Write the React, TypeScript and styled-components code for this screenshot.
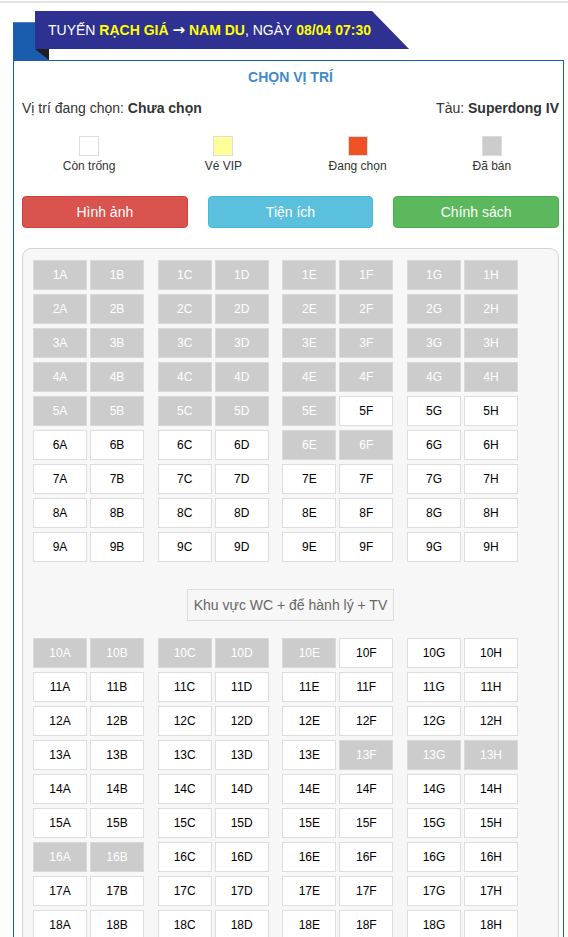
import React from 'react';
import styled, { createGlobalStyle } from 'styled-components';

const GlobalStyle = createGlobalStyle`
    html, body {
        margin: 0;
        padding: 0;
        background: #fff;
        overflow: hidden;
    }
    body {
        font-family: "Liberation Sans", Arial, sans-serif;
        font-size: 14px;
        color: #333;
    }
    * {
        box-sizing: border-box;
    }
`;

const Page = styled.div`
    width: 568px;
    padding: 0 4px 0 13px;
`;

const TopRule = styled.div`
    height: 2px;
    margin: 1px -4px 0 -13px;
    background: #e4e4e4;
`;

const Header = styled.div`
    position: relative;
    height: 49px;
    margin-top: 8px;
`;

const BlueTab = styled.div`
    position: absolute;
    left: 0;
    top: 11px;
    width: 36px;
    height: 38px;
    background: #1a5cae;
    border-top: 1px solid #4a80c2;
`;

const Fold = styled.div`
    position: absolute;
    left: 22px;
    top: 38px;
    width: 0;
    height: 0;
    border-top: 11px solid #1f1f22;
    border-left: 14px solid transparent;
`;

const Banner = styled.div`
    position: relative;
    z-index: 1;
    display: inline-flex;
    align-items: center;
    height: 38px;
    margin-left: 22px;
    padding: 0 38px 0 13px;
    background: #2e3192;
    color: #fff;
    font-size: 14px;
    white-space: nowrap;
    clip-path: polygon(0 0, calc(100% - 37px) 0, 100% 100%, 0 100%);
`;

const Hi = styled.b`
    color: #ffff00;
`;

const Arrow = styled.span`
    font-family: "DejaVu Sans", sans-serif;
    font-weight: bold;
    font-size: 15px;
    color: #ffffff;
`;

const Panel = styled.div`
    border: 1px solid #1a5cae;
    border-bottom: none;
    padding: 6px 4px 0 8px;
`;

const Title = styled.div`
    text-align: center;
    font-weight: bold;
    color: #428bca;
    line-height: 20px;
`;

const InfoRow = styled.div`
    display: flex;
    justify-content: space-between;
    margin-top: 11px;
    line-height: 20px;
    color: #333;
`;

const Legend = styled.div`
    display: grid;
    grid-template-columns: repeat(4, 1fr);
    margin-top: 18px;
`;

const LegendItem = styled.div`
    display: flex;
    flex-direction: column;
    align-items: center;
`;

const Swatch = styled.div<{ $color: string }>`
    width: 20px;
    height: 20px;
    background: ${(p) => p.$color};
    border: 1px solid #dddddd;
`;

const LegendLabel = styled.div`
    line-height: 20px;
    font-size: 12px;
    color: #333;
`;

const Buttons = styled.div`
    display: grid;
    grid-template-columns: repeat(3, 1fr);
    column-gap: 20px;
    margin-top: 20px;
`;

const Button = styled.button<{ $bg: string; $border: string }>`
    height: 32px;
    border-radius: 4px;
    border: 1px solid ${(p) => p.$border};
    background: ${(p) => p.$bg};
    color: #fff;
    font-family: inherit;
    font-size: 14px;
    padding: 0;
`;

const SeatMap = styled.div`
    margin-top: 20px;
    padding: 11px 10px 20px;
    background: #f7f7f7;
    border: 1px solid #d2d2d2;
    border-radius: 9px;
`;

const Rows = styled.div`
    display: flex;
    flex-direction: column;
    gap: 4px;
`;

const Row = styled.div`
    display: flex;
    gap: 13.67px;
`;

const Pair = styled.div`
    display: flex;
    gap: 3px;
`;

const Seat = styled.div<{ $sold: boolean }>`
    width: 54px;
    height: 30px;
    display: flex;
    align-items: center;
    justify-content: center;
    font-size: 12px;
    border: 1px solid ${(p) => (p.$sold ? '#d9d9d9' : '#dddddd')};
    background: ${(p) => (p.$sold ? '#cccccc' : '#ffffff')};
    color: ${(p) => (p.$sold ? '#ffffff' : '#000000')};
`;

const Facility = styled.div`
    align-self: center;
    height: 32px;
    line-height: 30px;
    margin: 27px 0 17px;
    padding: 0 6px;
    border: 1px solid #dddddd;
    color: #666;
    font-size: 14px;
`;

const Column = styled.div`
    display: flex;
    flex-direction: column;
`;

const cols = [
    ['A', 'B'],
    ['C', 'D'],
    ['E', 'F'],
    ['G', 'H'],
];

const sold = new Set<string>([
    ...[1, 2, 3, 4].flatMap((r) => 'ABCDEFGH'.split('').map((c) => `${r}${c}`)),
    '5A', '5B', '5C', '5D', '5E',
    '6E', '6F',
    '10A', '10B', '10C', '10D', '10E',
    '13F', '13G', '13H',
    '16A', '16B',
]);

const SeatRows: React.FC<{ from: number; to: number }> = ({ from, to }) => {
    const rows: number[] = [];
    for (let r = from; r <= to; r++) rows.push(r);
    return (
        <Rows>
            {rows.map((r) => (
                <Row key={r}>
                    {cols.map((pair) => (
                        <Pair key={pair[0]}>
                            {pair.map((c) => {
                                const id = `${r}${c}`;
                                return (
                                    <Seat key={id} $sold={sold.has(id)}>
                                        {id}
                                    </Seat>
                                );
                            })}
                        </Pair>
                    ))}
                </Row>
            ))}
        </Rows>
    );
};

const legend = [
    { label: 'Còn trống', color: '#ffffff' },
    { label: 'Vé VIP', color: '#ffff99' },
    { label: 'Đang chọn', color: '#f05223' },
    { label: 'Đã bán', color: '#cccccc' },
];

export default function App() {
    return (
        <Page>
            <GlobalStyle />
            <TopRule />
            <Header>
                <BlueTab />
                <Banner>
                    TUYẾN&nbsp;<Hi>RẠCH GIÁ <Arrow>→</Arrow> NAM DU</Hi>, NGÀY&nbsp;<Hi>08/04 07:30</Hi>
                </Banner>
                <Fold />
            </Header>
            <Panel>
                <Title>CHỌN VỊ TRÍ</Title>
                <InfoRow>
                    <span>
                        Vị trí đang chọn: <b>Chưa chọn</b>
                    </span>
                    <span>
                        Tàu: <b>Superdong IV</b>
                    </span>
                </InfoRow>
                <Legend>
                    {legend.map((l) => (
                        <LegendItem key={l.label}>
                            <Swatch $color={l.color} />
                            <LegendLabel>{l.label}</LegendLabel>
                        </LegendItem>
                    ))}
                </Legend>
                <Buttons>
                    <Button $bg="#d9534f" $border="#d43f3a">Hình ảnh</Button>
                    <Button $bg="#5bc0de" $border="#46b8da">Tiện ích</Button>
                    <Button $bg="#5cb85c" $border="#4cae4c">Chính sách</Button>
                </Buttons>
                <SeatMap>
                    <Column>
                        <SeatRows from={1} to={9} />
                        <Facility>Khu vực WC + để hành lý + TV</Facility>
                        <SeatRows from={10} to={18} />
                    </Column>
                </SeatMap>
            </Panel>
        </Page>
    );
}
